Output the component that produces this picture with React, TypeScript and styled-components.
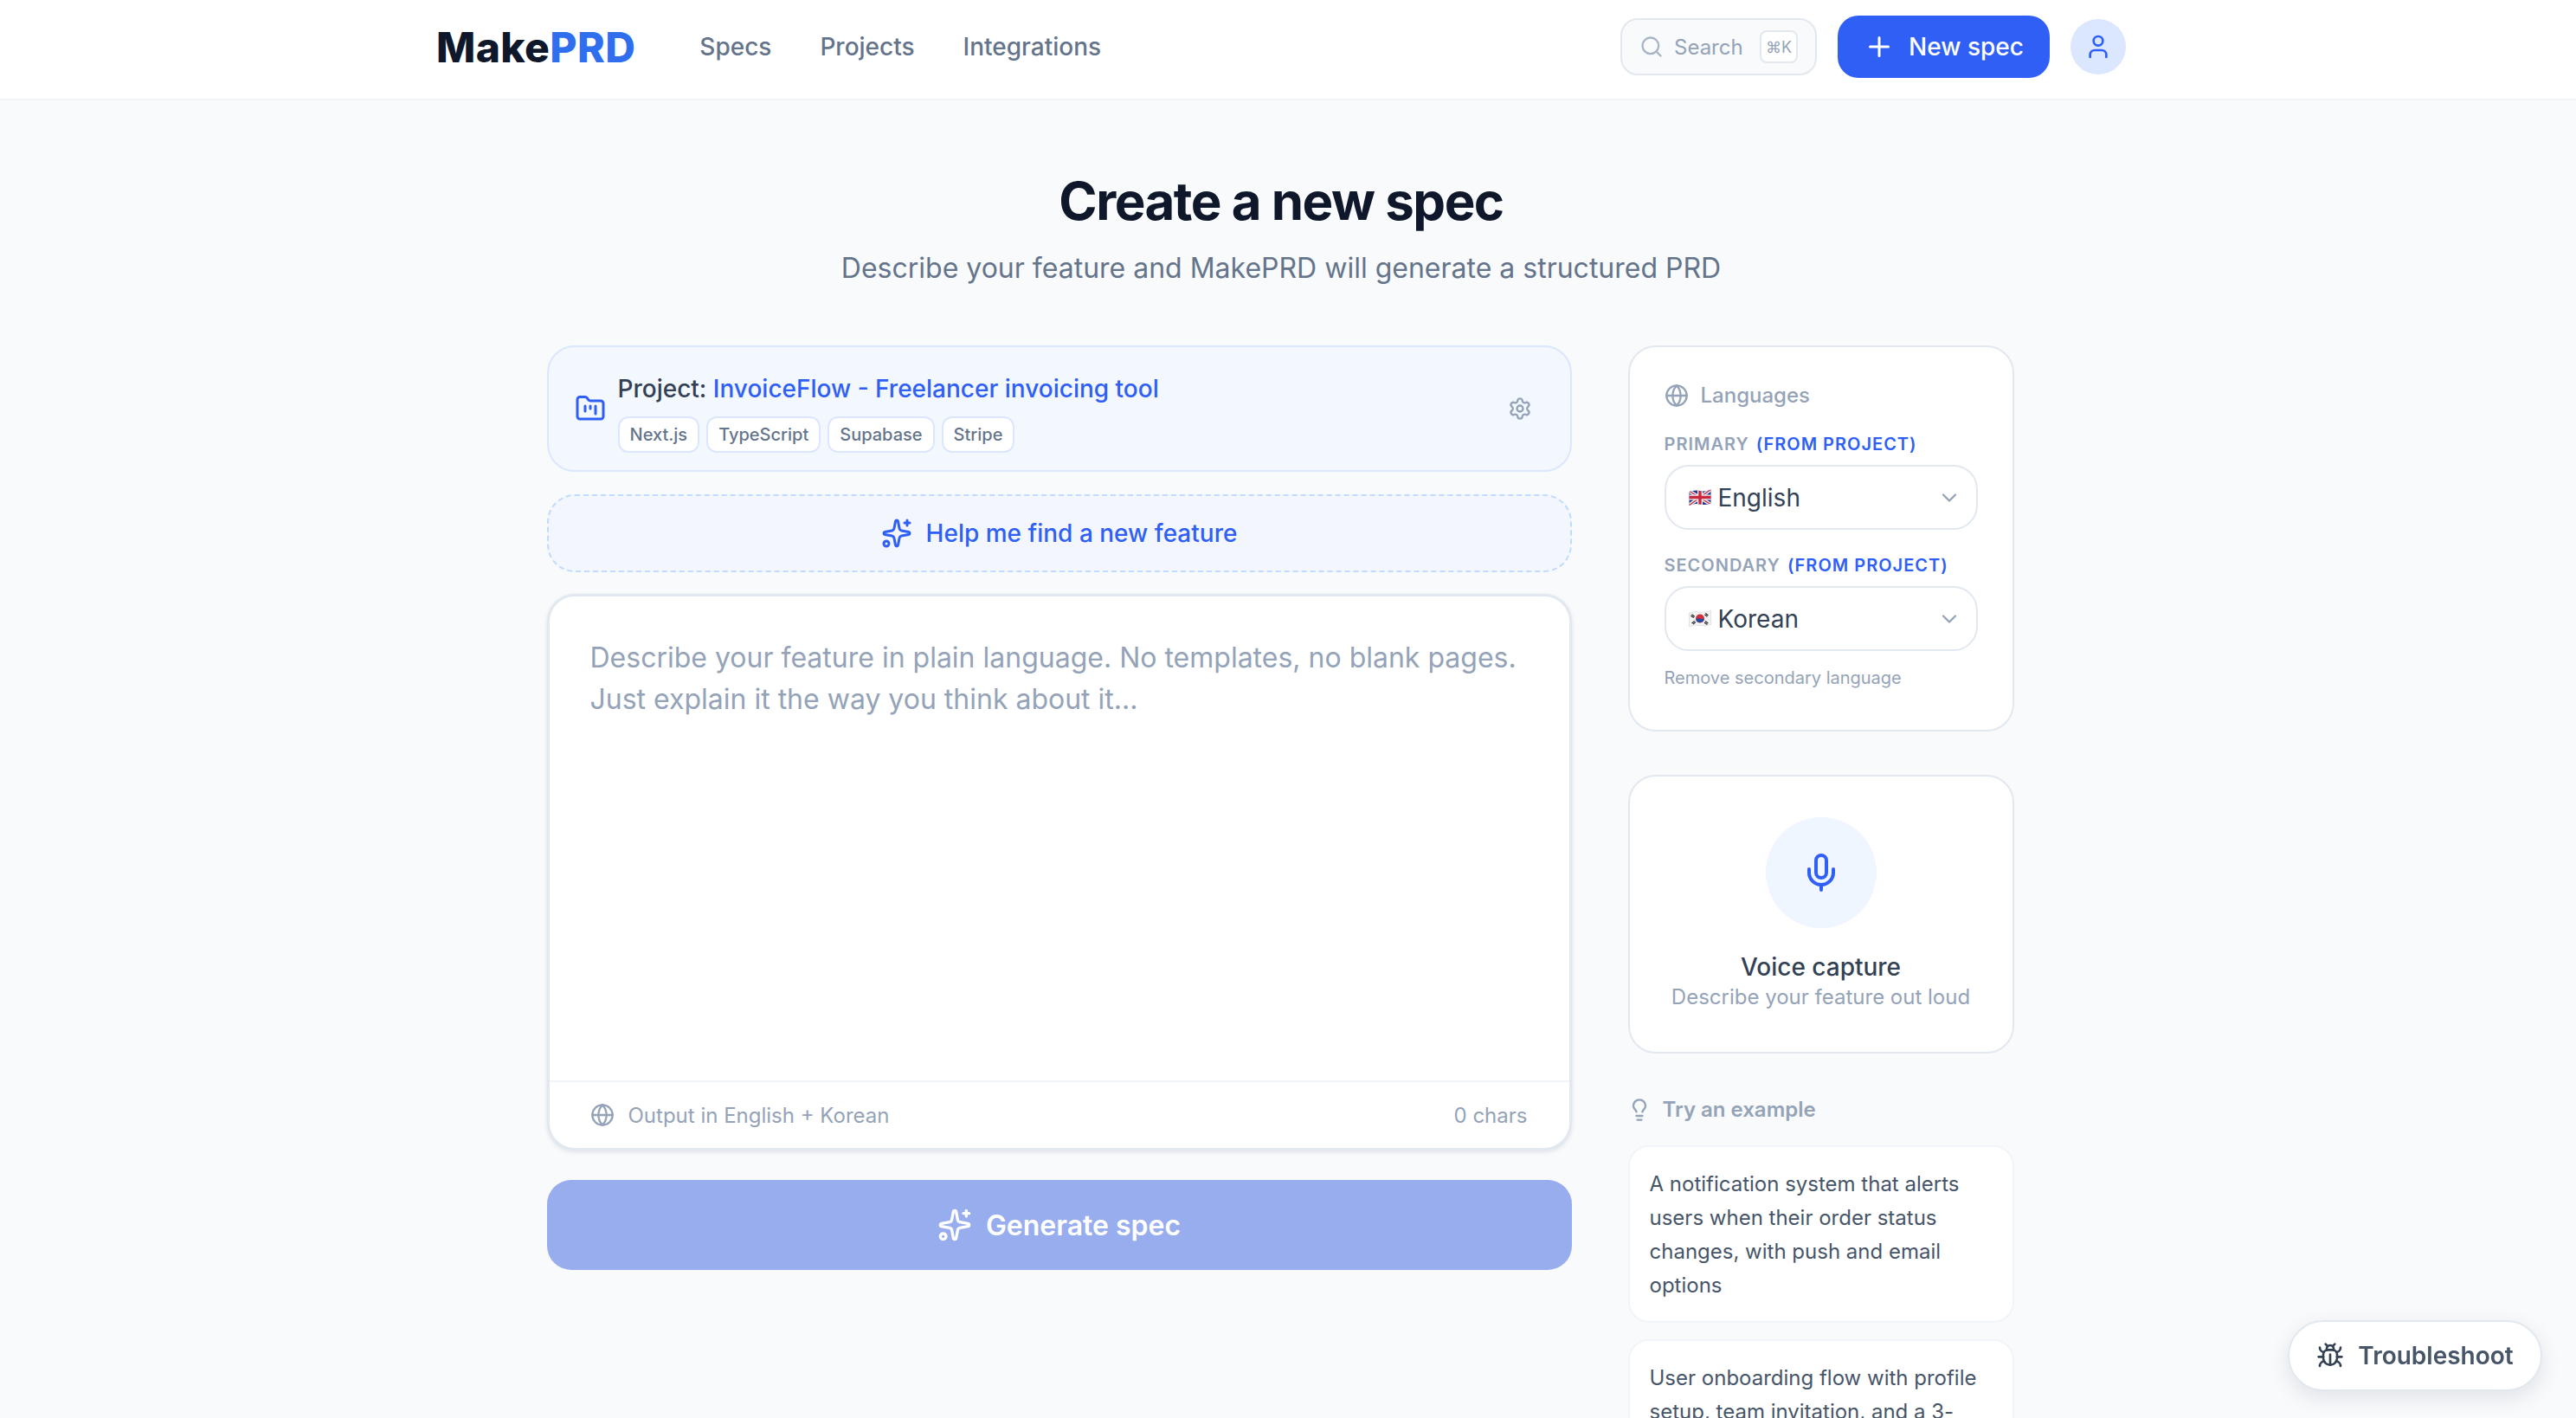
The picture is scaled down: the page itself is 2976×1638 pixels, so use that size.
import React from "react";
import styled, { createGlobalStyle } from "styled-components";
import {
  Search,
  Plus,
  User,
  FolderKanban,
  Settings,
  Sparkles,
  Globe,
  ChevronDown,
  Mic,
  Lightbulb,
  Bug,
} from "lucide-react";

const Global = createGlobalStyle`
  html, body { margin: 0; padding: 0; height: 100%; overflow: hidden; background: #f8fafc; }
  #root { height: 100%; }
  * { box-sizing: border-box; }
  body { font-family: Inter, "Noto Sans", "Liberation Sans", sans-serif; -webkit-font-smoothing: antialiased; }
`;

const Page = styled.div`
  height: 1638px;
  overflow: hidden;
  background: #f8fafc;
`;

const TopBar = styled.header`
  height: 116px;
  background: #ffffff;
  border-bottom: 2px solid #f1f5f9;
  padding-right: 16px;
`;

const TopInner = styled.div`
  width: 1952px;
  height: 108px;
  margin: 0 auto;
  display: flex;
  align-items: center;
`;

const Logo = styled.div`
  font-size: 48px;
  font-weight: 800;
  letter-spacing: 0.4px;
  color: #0f172a;
  margin-right: 74px;
`;

const LogoAccent = styled.span`
  color: #2f6fed;
`;

const Nav = styled.nav`
  display: flex;
  gap: 56px;
  flex: 1;
`;

const NavLink = styled.a`
  font-size: 28px;
  font-weight: 500;
  color: #64748b;
`;

const SearchBox = styled.div`
  width: 227px;
  height: 66px;
  display: flex;
  align-items: center;
  gap: 12px;
  padding: 0 20px;
  border: 2px solid #e2e8f0;
  border-radius: 20px;
  background: #f8fafc;
  color: #94a3b8;
  font-size: 24px;
  margin-right: 24px;
  svg { color: #a8b4c6; flex: none; }
`;

const SearchLabel = styled.span`
  flex: 1;
`;

const Kbd = styled.kbd`
  width: 44px;
  height: 38px;
  display: flex;
  align-items: center;
  justify-content: center;
  background: #ffffff;
  border: 2px solid #e2e8f0;
  border-radius: 8px;
  font-family: Inter, "DejaVu Sans", sans-serif;
  font-size: 18px;
  color: #94a3b8;
`;

const NewButton = styled.button`
  width: 245px;
  height: 72px;
  display: flex;
  align-items: center;
  justify-content: center;
  gap: 16px;
  background: #2f5ff5;
  color: #ffffff;
  border: 0;
  border-radius: 24px;
  font-family: inherit;
  font-size: 28px;
  font-weight: 500;
  margin-right: 24px;
`;

const Avatar = styled.div`
  width: 64px;
  height: 64px;
  border-radius: 50%;
  background: #dbe7fe;
  color: #2f5ff5;
  display: flex;
  align-items: center;
  justify-content: center;
`;

const Main = styled.main`
  padding: 78px 18px 0 0;
`;

const Heading = styled.h1`
  margin: 0 0 0 2px;
  text-align: center;
  font-size: 60px;
  line-height: 76px;
  font-weight: 700;
  letter-spacing: -1.5px;
  color: #0f172a;
`;

const Subheading = styled.p`
  margin: 16px 0 65px 2px;
  text-align: center;
  font-size: 32px;
  line-height: 48px;
  color: #64748b;
`;

const Columns = styled.div`
  width: 1695px;
  margin: 0 auto;
  display: grid;
  grid-template-columns: 1184px 446px;
  column-gap: 65px;
  align-items: start;
`;

const LeftColumn = styled.div`
  display: flex;
  flex-direction: column;
`;

const RightColumn = styled.div`
  display: flex;
  flex-direction: column;
`;

const ProjectCard = styled.section`
  height: 146px;
  display: flex;
  align-items: center;
  padding: 0 44px 0 30px;
  background: #f3f7fe;
  border: 2px solid #dbe7fe;
  border-radius: 32px;
  margin-bottom: 26px;
  color: #2f5ff5;
`;

const ProjectBody = styled.div`
  flex: 1;
  margin-left: 14px;
  padding-top: 8px;
`;

const ProjectTitle = styled.div`
  font-size: 28px;
  line-height: 40px;
  font-weight: 500;
  color: #334155;
`;

const ProjectName = styled.span`
  color: #2f5ff5;
`;

const TagRow = styled.div`
  display: flex;
  gap: 8px;
  margin-top: 12px;
`;

const Tag = styled.span`
  height: 42px;
  display: flex;
  align-items: center;
  padding: 0 12px;
  background: #ffffff;
  border: 2px solid #dbe7fe;
  border-radius: 12px;
  font-size: 20px;
  font-weight: 500;
  color: #64748b;
`;

const GearWrap = styled.span`
  display: flex;
  color: #94a3b8;
`;

const FindButton = styled.button`
  height: 90px;
  display: flex;
  align-items: center;
  justify-content: center;
  gap: 16px;
  background: #f3f7fd;
  border: 2px dashed #bfdbfe;
  border-radius: 32px;
  font-family: inherit;
  font-size: 28px;
  font-weight: 500;
  color: #2f5ff5;
  margin-bottom: 25px;
`;

const Composer = styled.section`
  height: 643px;
  display: flex;
  flex-direction: column;
  background: #ffffff;
  border: 3px solid #e2e8f0;
  border-radius: 32px;
  box-shadow: 0 2px 5px rgba(15, 23, 42, 0.1);
  margin-bottom: 34px;
`;

const Placeholder = styled.div`
  flex: 1;
  padding: 47px 47px 0;
  font-size: 32px;
  line-height: 48px;
  color: #94a3b8;
`;

const ComposerFooter = styled.div`
  height: 78px;
  display: flex;
  align-items: center;
  padding: 0 48px 0 47px;
  border-top: 2px solid #f1f5f9;
  font-size: 24px;
  color: #94a3b8;
`;

const OutputLabel = styled.span`
  flex: 1;
  margin-left: 16px;
`;

const GenerateButton = styled.button`
  height: 104px;
  display: flex;
  align-items: center;
  justify-content: center;
  gap: 16px;
  background: #98adee;
  color: #ffffff;
  border: 0;
  border-radius: 28px;
  font-family: inherit;
  font-size: 32px;
  font-weight: 600;
`;

const LanguagesCard = styled.section`
  height: 446px;
  padding: 38px 40px 0;
  background: #ffffff;
  border: 2px solid #e2e8f0;
  border-radius: 32px;
  margin-bottom: 50px;
`;

const SectionTitle = styled.div`
  display: flex;
  align-items: center;
  gap: 14px;
  font-size: 24px;
  line-height: 36px;
  font-weight: 500;
  color: #94a3b8;
`;

const FieldLabel = styled.div<{ $top: number }>`
  display: flex;
  gap: 8px;
  font-size: 20px;
  line-height: 28px;
  font-weight: 600;
  letter-spacing: 1px;
  text-transform: uppercase;
  color: #94a3b8;
  margin: ${(p) => p.$top}px 0 10px;
`;

const FromProject = styled.span`
  color: #2f5ff5;
`;

const SelectBox = styled.div`
  height: 75px;
  display: flex;
  align-items: center;
  gap: 8px;
  padding: 0 17px 0 26px;
  border: 2px solid #e2e8f0;
  border-radius: 28px;
  font-size: 28px;
  color: #334155;
  svg.chev { margin-left: auto; color: #94a3b8; }
`;

const RemoveLink = styled.div`
  margin-top: 17px;
  font-size: 20px;
  line-height: 28px;
  color: #94a3b8;
`;

const VoiceCard = styled.section`
  height: 322px;
  display: flex;
  flex-direction: column;
  align-items: center;
  padding-top: 47px;
  background: #ffffff;
  border: 2px solid #e2e8f0;
  border-radius: 32px;
  margin-bottom: 47px;
`;

const MicCircle = styled.div`
  width: 128px;
  height: 128px;
  border-radius: 50%;
  background: #eff6ff;
  color: #2f5ff5;
  display: flex;
  align-items: center;
  justify-content: center;
  margin-bottom: 25px;
`;

const VoiceTitle = styled.div`
  font-size: 28px;
  line-height: 40px;
  font-weight: 500;
  color: #334155;
`;

const VoiceHint = styled.div`
  font-size: 24px;
  line-height: 30px;
  color: #94a3b8;
`;

const ExampleTitle = styled(SectionTitle)`
  gap: 13px;
  margin: 0 0 23px;
  font-weight: 600;
  svg { margin-left: -1px; }
`;

const ExampleCard = styled.button`
  display: block;
  text-align: left;
  padding: 23px 22px 22px 23px;
  background: #ffffff;
  border: 2px solid #f1f5f9;
  border-radius: 24px;
  font-family: inherit;
  font-size: 24px;
  line-height: 39px;
  color: #475569;
  margin-bottom: 19px;
`;

const TroubleButton = styled.button`
  position: fixed;
  right: 39px;
  bottom: 31px;
  width: 294px;
  height: 82px;
  display: flex;
  align-items: center;
  justify-content: center;
  gap: 16px;
  background: #ffffff;
  border: 2px solid #e2e8f0;
  border-radius: 41px;
  box-shadow: 0 8px 24px rgba(15, 23, 42, 0.1);
  font-family: inherit;
  font-size: 28px;
  font-weight: 600;
  color: #475569;
  svg { color: #334155; }
`;

const UkFlag = () => (
  <svg width="26" height="20" viewBox="0 0 26 20" aria-hidden="true">
    <defs>
      <clipPath id="uk">
        <path d="M0.5 3 Q7 0.5 13 2 T25.5 0.5 V16.5 Q19 19 13 17.5 T0.5 19 Z" />
      </clipPath>
    </defs>
    <g clipPath="url(#uk)">
      <rect width="26" height="20" fill="#25378a" />
      <path d="M0 2 L26 18 M26 0 L0 19" stroke="#f4f4f8" strokeWidth="4" />
      <path d="M0 2 L26 18 M26 0 L0 19" stroke="#c8283c" strokeWidth="1.4" />
      <path d="M13 0 V20 M0 9.5 H26" stroke="#f4f4f8" strokeWidth="6" />
      <path d="M13 0 V20 M0 9.5 H26" stroke="#c8283c" strokeWidth="3.4" />
    </g>
  </svg>
);

const KrFlag = () => (
  <svg width="26" height="20" viewBox="0 0 26 20" aria-hidden="true">
    <path d="M0.5 3 Q7 0.5 13 2 T25.5 0.5 V16.5 Q19 19 13 17.5 T0.5 19 Z" fill="#f4f4f4" stroke="#cfd3d9" strokeWidth="0.6" />
    <circle cx="13" cy="9.5" r="5" fill="#d3303f" />
    <path d="M8.1 10.5 a5 5 0 0 0 9.8 -1 q-2.2 1.6 -4.9 0 q-2.6 -1.4 -4.9 1" fill="#274c9e" />
    <path d="M3.4 4.8 L6.8 7.2 M2.4 6.2 L5.8 8.6 M19.4 3.4 L22.4 6 M18.4 4.8 L21.4 7.4 M3.6 15 L6.6 12.4 M5 16 L8 13.4 M19 12.6 L22.4 15 M18 14 L21.4 16.4" stroke="#26262e" strokeWidth="1.2" />
  </svg>
);

export default function App() {
  return (
    <Page>
      <Global />
      <TopBar>
        <TopInner>
          <Logo>
            Make<LogoAccent>PRD</LogoAccent>
          </Logo>
          <Nav>
            <NavLink>Specs</NavLink>
            <NavLink>Projects</NavLink>
            <NavLink>Integrations</NavLink>
          </Nav>
          <SearchBox>
            <Search size={28} strokeWidth={2} />
            <SearchLabel>Search</SearchLabel>
            <Kbd>⌘K</Kbd>
          </SearchBox>
          <NewButton>
            <Plus size={36} strokeWidth={2} />
            New spec
          </NewButton>
          <Avatar>
            <User size={32} strokeWidth={2} />
          </Avatar>
        </TopInner>
      </TopBar>
      <Main>
        <Heading>Create a new spec</Heading>
        <Subheading>Describe your feature and MakePRD will generate a structured PRD</Subheading>
        <Columns>
          <LeftColumn>
            <ProjectCard>
              <FolderKanban size={36} strokeWidth={2} />
              <ProjectBody>
                <ProjectTitle>
                  Project: <ProjectName>InvoiceFlow - Freelancer invoicing tool</ProjectName>
                </ProjectTitle>
                <TagRow>
                  <Tag>Next.js</Tag>
                  <Tag>TypeScript</Tag>
                  <Tag>Supabase</Tag>
                  <Tag>Stripe</Tag>
                </TagRow>
              </ProjectBody>
              <GearWrap>
                <Settings size={28} strokeWidth={2} />
              </GearWrap>
            </ProjectCard>
            <FindButton>
              <Sparkles size={36} strokeWidth={2} />
              Help me find a new feature
            </FindButton>
            <Composer>
              <Placeholder>
                Describe your feature in plain language. No templates, no blank pages.
                <br />
                Just explain it the way you think about it...
              </Placeholder>
              <ComposerFooter>
                <Globe size={28} strokeWidth={2} />
                <OutputLabel>Output in English + Korean</OutputLabel>
                <span>0 chars</span>
              </ComposerFooter>
            </Composer>
            <GenerateButton>
              <Sparkles size={40} strokeWidth={2} />
              Generate spec
            </GenerateButton>
          </LeftColumn>
          <RightColumn>
            <LanguagesCard>
              <SectionTitle>
                <Globe size={28} strokeWidth={2} />
                Languages
              </SectionTitle>
              <FieldLabel $top={24}>
                Primary <FromProject>(from project)</FromProject>
              </FieldLabel>
              <SelectBox>
                <UkFlag />
                English
                <ChevronDown className="chev" size={28} strokeWidth={2} />
              </SelectBox>
              <FieldLabel $top={27}>
                Secondary <FromProject>(from project)</FromProject>
              </FieldLabel>
              <SelectBox>
                <KrFlag />
                Korean
                <ChevronDown className="chev" size={28} strokeWidth={2} />
              </SelectBox>
              <RemoveLink>Remove secondary language</RemoveLink>
            </LanguagesCard>
            <VoiceCard>
              <MicCircle>
                <Mic size={48} strokeWidth={2} />
              </MicCircle>
              <VoiceTitle>Voice capture</VoiceTitle>
              <VoiceHint>Describe your feature out loud</VoiceHint>
            </VoiceCard>
            <ExampleTitle>
              <Lightbulb size={28} strokeWidth={2} />
              Try an example
            </ExampleTitle>
            <ExampleCard>
              A notification system that alerts users when their order status changes, with push and email options
            </ExampleCard>
            <ExampleCard>
              User onboarding flow with profile setup, team invitation, and a 3-step product tour
            </ExampleCard>
          </RightColumn>
        </Columns>
      </Main>
      <TroubleButton>
        <Bug size={32} strokeWidth={2} />
        Troubleshoot
      </TroubleButton>
    </Page>
  );
}
